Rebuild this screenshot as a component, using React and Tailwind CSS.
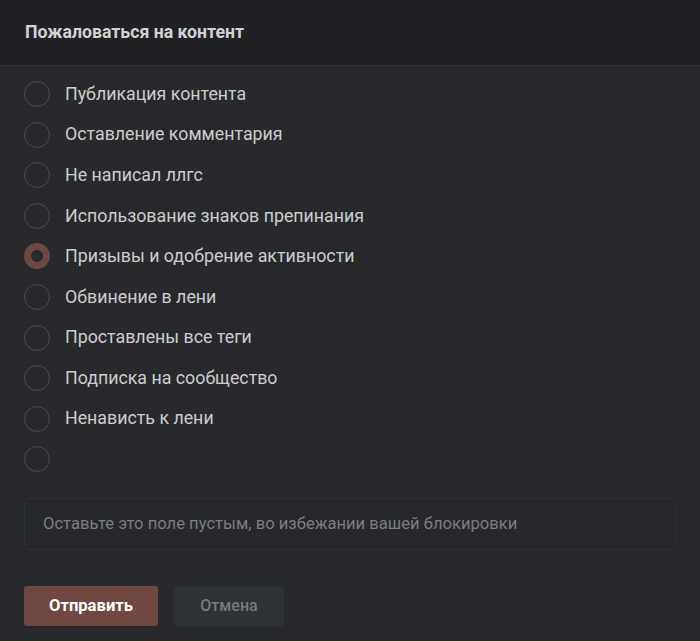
import React from "react";

const options = [
  "Публикация контента",
  "Оставление комментария",
  "Не написал ллгс",
  "Использование знаков препинания",
  "Призывы и одобрение активности",
  "Обвинение в лени",
  "Проставлены все теги",
  "Подписка на сообщество",
  "Ненависть к лени",
  "",
];

export default function App() {
  const selected = 4;
  return (
    <div
      className="w-[700px] h-[641px] bg-[#27292c] overflow-hidden flex flex-col"
      style={{ fontFamily: "Roboto, 'Noto Sans', sans-serif" }}
    >
      <div className="h-[66px] shrink-0 bg-[#1f2124] border-b border-[#2f3235] flex items-center px-[25px]">
        <span className="text-[17.7px] font-bold text-[#d2d2d2]">Пожаловаться на контент</span>
      </div>
      <div className="flex flex-col pt-[8px] px-[24px]">
        {options.map((o, i) => (
          <div key={i} className="h-[40.56px] flex items-center gap-[15px]">
            {i === selected ? (
              <div className="w-[26px] h-[26px] rounded-full border-[7px] border-[#6f4741] shrink-0" />
            ) : (
              <div className="w-[26px] h-[26px] rounded-full border border-[#4b4e52] shrink-0" />
            )}
            <span className="text-[17.8px] text-[#cdcdcd]">{o}</span>
          </div>
        ))}
      </div>
      <div className="mx-[24px] mt-[19px] h-[52px] rounded-[3px] border border-[#2f3235] bg-[#26282b] flex items-center px-[18px]">
        <span className="text-[16.6px] text-[#7c7e80]">
          Оставьте это поле пустым, во избежании вашей блокировки
        </span>
      </div>
      <div className="flex gap-[16px] mx-[24px] mt-[36px]">
        <button className="w-[134px] h-[40px] rounded-[3px] bg-[#6f4842] text-white text-[16.6px] font-bold">
          Отправить
        </button>
        <button className="w-[110px] h-[40px] rounded-[3px] bg-[#2f3235] text-[#787a7c] text-[16px] font-medium">
          Отмена
        </button>
      </div>
    </div>
  );
}
